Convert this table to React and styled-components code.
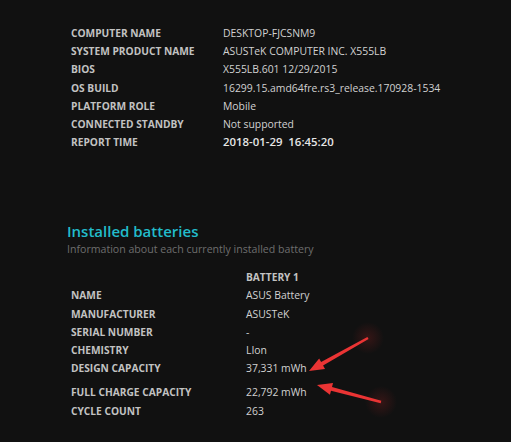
import React from "react";
import styled, { createGlobalStyle } from "styled-components";

const Global = createGlobalStyle`
  html, body { margin: 0; padding: 0; background: #111111; }
  body { font-family: "Open Sans", "Noto Sans", sans-serif; }
`;

const Page = styled.div`
  position: relative;
  width: 511px;
  height: 442px;
  overflow: hidden;
  background: #111111;
  box-sizing: border-box;
  padding: 24px 0 0 67px;
`;

const Table = styled.div`
  display: grid;
  grid-template-columns: ${(p) => p.$labelWidth}px auto;
  padding-left: 4px;
`;

const Label = styled.div`
  font-size: 10.2px;
  font-weight: 700;
  color: #c2c2c2;
  line-height: 18.2px;
  white-space: nowrap;
  margin-top: ${(p) => (p.$gap ? "6px" : "0")};
`;

const Value = styled.div`
  font-weight: ${(p) => (p.$strong ? 600 : 400)};
  color: ${(p) => (p.$strong ? "#e6e6e6" : "#d2d2d2")};
  line-height: 18.2px;
  white-space: nowrap;
  margin-top: ${(p) => (p.$gap ? "6px" : "0")};
  font-size: ${(p) => (p.$strong ? "11.4px" : "10.4px")};
`;

const ColumnHead = styled.div`
  font-size: 10.2px;
  font-weight: 700;
  color: #c2c2c2;
  line-height: 18px;
`;

const Section = styled.section`
  margin-top: 71px;
`;

const Heading = styled.h2`
  margin: 0;
  font-size: 15px;
  font-weight: 600;
  color: #22bccb;
  line-height: 19px;
`;

const Sub = styled.p`
  margin: 0 0 11px 0;
  font-size: 10.6px;
  color: #6e6e6e;
  line-height: 16px;
`;

const Overlay = styled.svg`
  position: absolute;
  left: 0;
  top: 0;
  pointer-events: none;
`;

const system = [
  ["COMPUTER NAME", "DESKTOP-FJCSNM9"],
  ["SYSTEM PRODUCT NAME", "ASUSTeK COMPUTER INC. X555LB"],
  ["BIOS", "X555LB.601 12/29/2015"],
  ["OS BUILD", "16299.15.amd64fre.rs3_release.170928-1534"],
  ["PLATFORM ROLE", "Mobile"],
  ["CONNECTED STANDBY", "Not supported"],
  ["REPORT TIME", "2018-01-29\u00a0\u00a016:45:20", true],
];

const battery = [
  ["NAME", "ASUS Battery"],
  ["MANUFACTURER", "ASUSTeK"],
  ["SERIAL NUMBER", "-"],
  ["CHEMISTRY", "LIon"],
  ["DESIGN CAPACITY", "37,331 mWh"],
  ["FULL CHARGE CAPACITY", "22,792 mWh", false, true],
  ["CYCLE COUNT", "263"],
];

function Arrow({ x1, y1, x2, y2 }) {
  const dx = x2 - x1;
  const dy = y2 - y1;
  const len = Math.hypot(dx, dy);
  const ux = dx / len;
  const uy = dy / len;
  const hl = 15;
  const hw = 6;
  const bx = x2 - ux * hl;
  const by = y2 - uy * hl;
  const px = -uy;
  const py = ux;
  return (
    <g>
      <circle cx={x1} cy={y1} r="16" fill="url(#glow)" />
      <path
        d={`M${x1 + px * 1.2} ${y1 + py * 1.2} L${bx + px * 2} ${by + py * 2} L${bx + px * hw} ${by + py * hw} L${x2} ${y2} L${bx - px * hw} ${by - py * hw} L${bx - px * 2} ${by - py * 2} L${x1 - px * 1.2} ${y1 - py * 1.2} Z`}
        fill="#ea3434"
      />
    </g>
  );
}

export default function App() {
  return (
    <>
      <Global />
      <Page>
        <Table $labelWidth={152}>
          {system.map(([k, v, strong]) => (
            <React.Fragment key={k}>
              <Label>{k}</Label>
              <Value $strong={strong}>{v}</Value>
            </React.Fragment>
          ))}
        </Table>
        <Section>
          <Heading>Installed batteries</Heading>
          <Sub>Information about each currently installed battery</Sub>
          <Table $labelWidth={175}>
            <div />
            <ColumnHead>BATTERY 1</ColumnHead>
            {battery.map(([k, v, strong, gap]) => (
              <React.Fragment key={k}>
                <Label $gap={gap}>{k}</Label>
                <Value $gap={gap}>{v}</Value>
              </React.Fragment>
            ))}
          </Table>
        </Section>
        <Overlay width="511" height="442" viewBox="0 0 511 442">
          <defs>
            <radialGradient id="glow">
              <stop offset="0%" stopColor="#8a2020" stopOpacity="0.3" />
              <stop offset="100%" stopColor="#8a2020" stopOpacity="0" />
            </radialGradient>
          </defs>
          <Arrow x1={368} y1={338} x2={309} y2={371} />
          <Arrow x1={381} y1={402} x2={317} y2={385} />
        </Overlay>
      </Page>
    </>
  );
}
